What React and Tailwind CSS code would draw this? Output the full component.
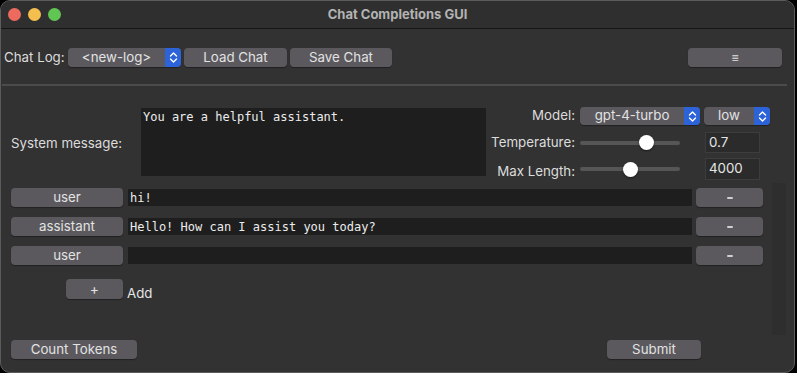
import React from "react";

const btn =
  "flex items-center justify-center rounded-[4px] bg-[#5b595e] text-[#e2e2e2] text-[13.3px] leading-none shadow-[0_1px_1px_rgba(0,0,0,0.35)]";

function Chevrons() {
  return (
    <svg width="9" height="13" viewBox="0 0 9 13" fill="none">
      <path d="M1.5 5 L4.5 2 L7.5 5" stroke="white" strokeWidth="1.4" strokeLinecap="round" strokeLinejoin="round" />
      <path d="M1.5 8 L4.5 11 L7.5 8" stroke="white" strokeWidth="1.4" strokeLinecap="round" strokeLinejoin="round" />
    </svg>
  );
}

function Select({ label, w }) {
  return (
    <div className={`flex h-[19px] rounded-[4px] bg-[#5b595e] shadow-[0_1px_1px_rgba(0,0,0,0.35)] ${w}`}>
      <div className="flex-1 flex items-center justify-center text-[13.3px] text-[#e2e2e2] leading-none">{label}</div>
      <div className="w-[16px] flex items-center justify-center rounded-r-[4px] bg-[#2d63d8]">
        <Chevrons />
      </div>
    </div>
  );
}

function Slider({ pos }) {
  return (
    <div className="relative w-[100px] h-[15px] flex items-center">
      <div className="w-full h-[4px] rounded-full bg-[#565656]" />
      <div
        className="absolute top-0 w-[15px] h-[15px] rounded-full bg-white shadow-[0_1px_2px_rgba(0,0,0,0.5)]"
        style={{ left: pos - 7.5 }}
      />
    </div>
  );
}

function Row({ role, text }) {
  return (
    <div className="flex items-center h-[19px] pl-[10px]">
      <div className={`${btn} w-[112px] h-[19px]`}>{role}</div>
      <div className="ml-[5px] w-[564px] h-[17px] bg-[#1e1e1e] flex items-center pl-[2px] font-['DejaVu_Sans_Mono',monospace] text-[12px] text-[#ececec]">
        {text}
      </div>
      <div className={`${btn} ml-[4px] w-[67px] h-[19px]`}>
        <div className="w-[6px] h-[2px] bg-[#cfcfcf] rounded" />
      </div>
    </div>
  );
}

export default function App() {
  return (
    <div className="w-[797px] h-[373px] bg-black font-['Inter',sans-serif]">
      <div className="w-[795px] h-[373px] rounded-[10px] bg-[#323232] border border-[#5c5c5c] overflow-hidden flex flex-col">
        {/* Title bar */}
        <div className="h-[28px] bg-[#2f2f2f] border-b border-[#151515] grid grid-cols-[1fr_auto_1fr] items-center">
          <div className="flex items-center gap-[7px] pl-[7px]">
            <div className="w-[13px] h-[13px] rounded-full bg-[#ec6a5e]" />
            <div className="w-[13px] h-[13px] rounded-full bg-[#f4bf4f]" />
            <div className="w-[13px] h-[13px] rounded-full bg-[#61c554]" />
          </div>
          <div className="text-[13px] font-bold text-[#b3b3b3] leading-none">Chat Completions GUI</div>
          <div />
        </div>

        {/* Toolbar */}
        <div className="mt-[19px] flex items-center h-[19px] pl-[3px]">
          <span className="w-[60px] whitespace-nowrap text-[13.3px] text-[#dcdcdc] leading-none">Chat Log:</span>
          <div className="ml-[4px]">
            <Select label="<new-log>" w="w-[113px]" />
          </div>
          <div className={`${btn} ml-[3px] w-[103px] h-[19px]`}>Load Chat</div>
          <div className={`${btn} ml-[3px] w-[102px] h-[19px]`}>Save Chat</div>
          <div className={`${btn} ml-[296px] w-[94px] h-[19px]`}>
            <span className="text-[12px]">≡</span>
          </div>
        </div>

        {/* Separator */}
        <div className="mt-[17px] mx-[1px] w-[785px] h-[2px] bg-[#4b4b4b]" />

        {/* System / params */}
        <div className="mt-[21px] flex">
          <div className="w-[140px] pl-[10px] flex items-center">
            <span className="text-[13.3px] text-[#dcdcdc] leading-none">System message:</span>
          </div>
          <div className="mt-[1px] w-[345px] h-[68px] bg-[#1e1e1e] px-[2px] pt-[2px] font-['DejaVu_Sans_Mono',monospace] text-[12px] text-[#ececec] leading-[15px]">
            You are a helpful assistant.
          </div>
          <div className="flex flex-col">
            <div className="flex items-center h-[18px]">
              <span className="w-[89px] text-right text-[13.3px] text-[#dcdcdc] leading-none">Model:</span>
              <div className="ml-[5px]">
                <Select label="gpt-4-turbo" w="w-[120px] !h-[18px]" />
              </div>
              <div className="ml-[4px]">
                <Select label="low" w="w-[66px] !h-[18px]" />
              </div>
            </div>
            <div className="mt-[7px] flex items-center h-[21px]">
              <span className="w-[89px] text-right text-[13.3px] text-[#dcdcdc] leading-none">Temperature:</span>
              <div className="ml-[5px]">
                <Slider pos={66} />
              </div>
              <div className="ml-[25px] w-[55px] h-[21px] bg-[#2b2b2b] border border-[#3d3d3d] flex items-center pl-[3px] text-[13.3px] text-[#e6e6e6]">
                0.7
              </div>
            </div>
            <div className="mt-[5px] flex items-center h-[22px]">
              <span className="w-[89px] text-right text-[13.3px] text-[#dcdcdc] leading-none pt-[6px]">Max Length:</span>
              <div className="ml-[5px]">
                <Slider pos={50} />
              </div>
              <div className="ml-[25px] w-[55px] h-[22px] bg-[#2b2b2b] border border-[#3d3d3d] flex items-center pl-[3px] text-[13.3px] text-[#e6e6e6]">
                4000
              </div>
            </div>
          </div>
        </div>

        {/* Messages area */}
        <div className="mt-[3px] h-[152px] flex">
          <div className="flex-1 pt-[5px] flex flex-col">
            <div className="flex flex-col gap-[10px]">
              <Row role="user" text="hi!" />
              <Row role="assistant" text="Hello! How can I assist you today?" />
              <Row role="user" text="" />
            </div>
            <div className="mt-[14px] flex items-end pl-[65px]">
              <div className={`${btn} w-[57px] h-[20px]`}>
                <span className="text-[14px]">+</span>
              </div>
              <span className="ml-[4px] text-[13.3px] text-[#e6e6e6] leading-none mb-[-1px]">Add</span>
            </div>
          </div>
          <div className="w-[14px] mr-[8px] bg-[#2e2e2e]" />
        </div>

        {/* Bottom */}
        <div className="mt-[5px] flex items-center pl-[10px]">
          <div className={`${btn} w-[126px] h-[19px]`}>Count Tokens</div>
          <div className={`${btn} ml-[470px] w-[94px] h-[19px]`}>Submit</div>
        </div>
      </div>
    </div>
  );
}
